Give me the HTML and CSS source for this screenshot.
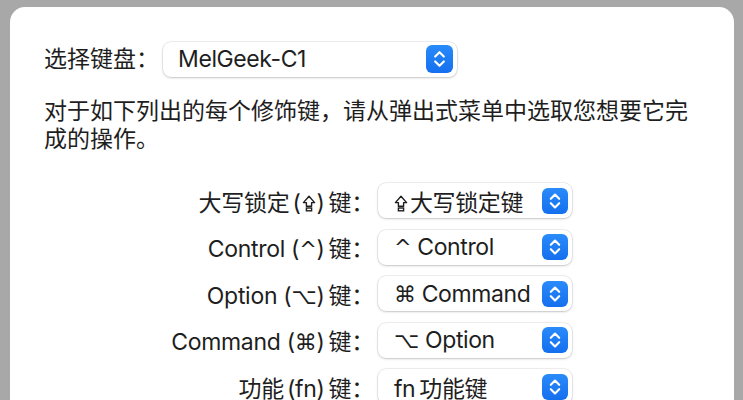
FILE: index.html
```html
<!DOCTYPE html>
<html lang="zh-CN">
<head>
<meta charset="utf-8">
<link rel="stylesheet" href="styles.css">
</head>
<body>
<div class="panel">
  <div class="kbd-row">
    <span class="kbd-label">选择键盘：</span>
    <div class="popup popup-wide">
      <span class="popup-text">MelGeek-C1</span>
      <span class="stepper"><svg viewBox="0 0 28 28" width="27" height="28"><path d="M9.5 11.5 L14 7 L18.5 11.5 M9.5 16.5 L14 21 L18.5 16.5" fill="none" stroke="#fff" stroke-width="2.2" stroke-linecap="round" stroke-linejoin="round"/></svg></span>
    </div>
  </div>
  <p class="intro">对于如下列出的每个修饰键，请从弹出式菜单中选取您想要它完成的操作。</p>
  <div class="mods">
    <span class="mod-label">大写锁定<span class="paren cjk">(<svg class="caps" viewBox="0 0 14 17" width="14" height="17"><path d="M7 1.2 L12.6 7.6 H9.6 V11.2 H4.4 V7.6 H1.4 Z" fill="none" stroke="#1e1e1e" stroke-width="1.4" stroke-linejoin="round"/><rect x="4.4" y="13" width="5.2" height="2.8" fill="none" stroke="#1e1e1e" stroke-width="1.4"/></svg>)</span>键：</span>
    <div class="popup"><span class="popup-text"><svg class="caps caps-lead" viewBox="0 0 14 17" width="14" height="17"><path d="M7 1.2 L12.6 7.6 H9.6 V11.2 H4.4 V7.6 H1.4 Z" fill="none" stroke="#1e1e1e" stroke-width="1.4" stroke-linejoin="round"/><rect x="4.4" y="13" width="5.2" height="2.8" fill="none" stroke="#1e1e1e" stroke-width="1.4"/></svg>大写锁定键</span><span class="stepper small"><svg viewBox="0 0 26 26" width="26" height="26"><path d="M8.8 10.8 L13 6.6 L17.2 10.8 M8.8 15.2 L13 19.4 L17.2 15.2" fill="none" stroke="#fff" stroke-width="2.1" stroke-linecap="round" stroke-linejoin="round"/></svg></span></div>

    <span class="mod-label">Control <span class="paren">(<span class="caret">^</span>)</span>键：</span>
    <div class="popup"><span class="popup-text"><span class="caret">^</span> Control</span><span class="stepper small"><svg viewBox="0 0 26 26" width="26" height="26"><path d="M8.8 10.8 L13 6.6 L17.2 10.8 M8.8 15.2 L13 19.4 L17.2 15.2" fill="none" stroke="#fff" stroke-width="2.1" stroke-linecap="round" stroke-linejoin="round"/></svg></span></div>

    <span class="mod-label">Option <span class="paren">(<span class="sym">⌥</span>)</span>键：</span>
    <div class="popup"><span class="popup-text"><span class="sym">⌘</span> Command</span><span class="stepper small"><svg viewBox="0 0 26 26" width="26" height="26"><path d="M8.8 10.8 L13 6.6 L17.2 10.8 M8.8 15.2 L13 19.4 L17.2 15.2" fill="none" stroke="#fff" stroke-width="2.1" stroke-linecap="round" stroke-linejoin="round"/></svg></span></div>

    <span class="mod-label">Command <span class="paren">(<span class="sym">⌘</span>)</span>键：</span>
    <div class="popup"><span class="popup-text"><span class="sym">⌥</span> Option</span><span class="stepper small"><svg viewBox="0 0 26 26" width="26" height="26"><path d="M8.8 10.8 L13 6.6 L17.2 10.8 M8.8 15.2 L13 19.4 L17.2 15.2" fill="none" stroke="#fff" stroke-width="2.1" stroke-linecap="round" stroke-linejoin="round"/></svg></span></div>

    <span class="mod-label">功能<span class="paren cjk">(fn)</span>键：</span>
    <div class="popup"><span class="popup-text">fn<span class="gap"></span>功能键</span><span class="stepper small"><svg viewBox="0 0 26 26" width="26" height="26"><path d="M8.8 10.8 L13 6.6 L17.2 10.8 M8.8 15.2 L13 19.4 L17.2 15.2" fill="none" stroke="#fff" stroke-width="2.1" stroke-linecap="round" stroke-linejoin="round"/></svg></span></div>
  </div>
</div>
</body>
</html>
```
FILE: styles.css
```css
html, body {
  margin: 0;
  padding: 0;
  height: 100%;
  overflow: hidden;
}
body {
  background: #a8a8a8;
  font-family: Inter, "Noto Sans CJK SC", sans-serif;
  color: #1e1e1e;
  font-size: 23px;
  padding: 7px 9px 0 10px;
  box-sizing: border-box;
}
.panel {
  background: #fff;
  border-radius: 15px 15px 0 0;
  height: 393px;
  padding: 34px 0 0 34px;
  box-sizing: border-box;
  overflow: hidden;
}
.kbd-row {
  display: flex;
  align-items: center;
  gap: 4px;
}
.kbd-label {
  line-height: 36px;
  white-space: nowrap;
}
.popup {
  background: #fff;
  border-radius: 8px;
  box-shadow: 0 0 0 0.5px rgba(0,0,0,0.12), 0 1px 2.5px rgba(0,0,0,0.18);
  height: 35px;
  display: flex;
  align-items: center;
  justify-content: space-between;
  padding: 0 4px 0 15px;
  box-sizing: border-box;
}
.popup-wide {
  width: 294px;
}
.popup-text {
  white-space: nowrap;
  letter-spacing: -0.4px;
}
.stepper {
  width: 27px;
  height: 28px;
  border-radius: 6px;
  background: linear-gradient(#2a8bfa, #146fee);
  display: flex;
  align-items: center;
  justify-content: center;
  flex: none;
}
.stepper.small {
  width: 26px;
  height: 26px;
}
.stepper svg {
  display: block;
}
.intro {
  margin: 20px 0 0 0;
  width: 660px;
  line-height: 28px;
}
.mods {
  display: grid;
  grid-template-columns: 330px 194px;
  column-gap: 4px;
  row-gap: 11.5px;
  grid-auto-rows: 35px;
  margin-top: 30px;
  align-items: center;
}
.mod-label {
  text-align: right;
  white-space: nowrap;
  letter-spacing: -0.3px;
}
.paren {
  margin: 0 4px 0 0;
}
.paren.cjk {
  margin-left: 3px;
}
.mods .popup {
  padding-left: 16px;
}
.caps {
  display: inline-block;
  vertical-align: -1px;
  margin: 0 1px;
}
.caps-lead {
  margin: 0 2px 0 0;
}
.gap {
  display: inline-block;
  width: 4px;
}
.caret {
  font-family: "DejaVu Sans", sans-serif;
  font-size: 21px;
}
.sym {
  font-family: "DejaVu Sans", sans-serif;
  font-size: 22px;
}
```
